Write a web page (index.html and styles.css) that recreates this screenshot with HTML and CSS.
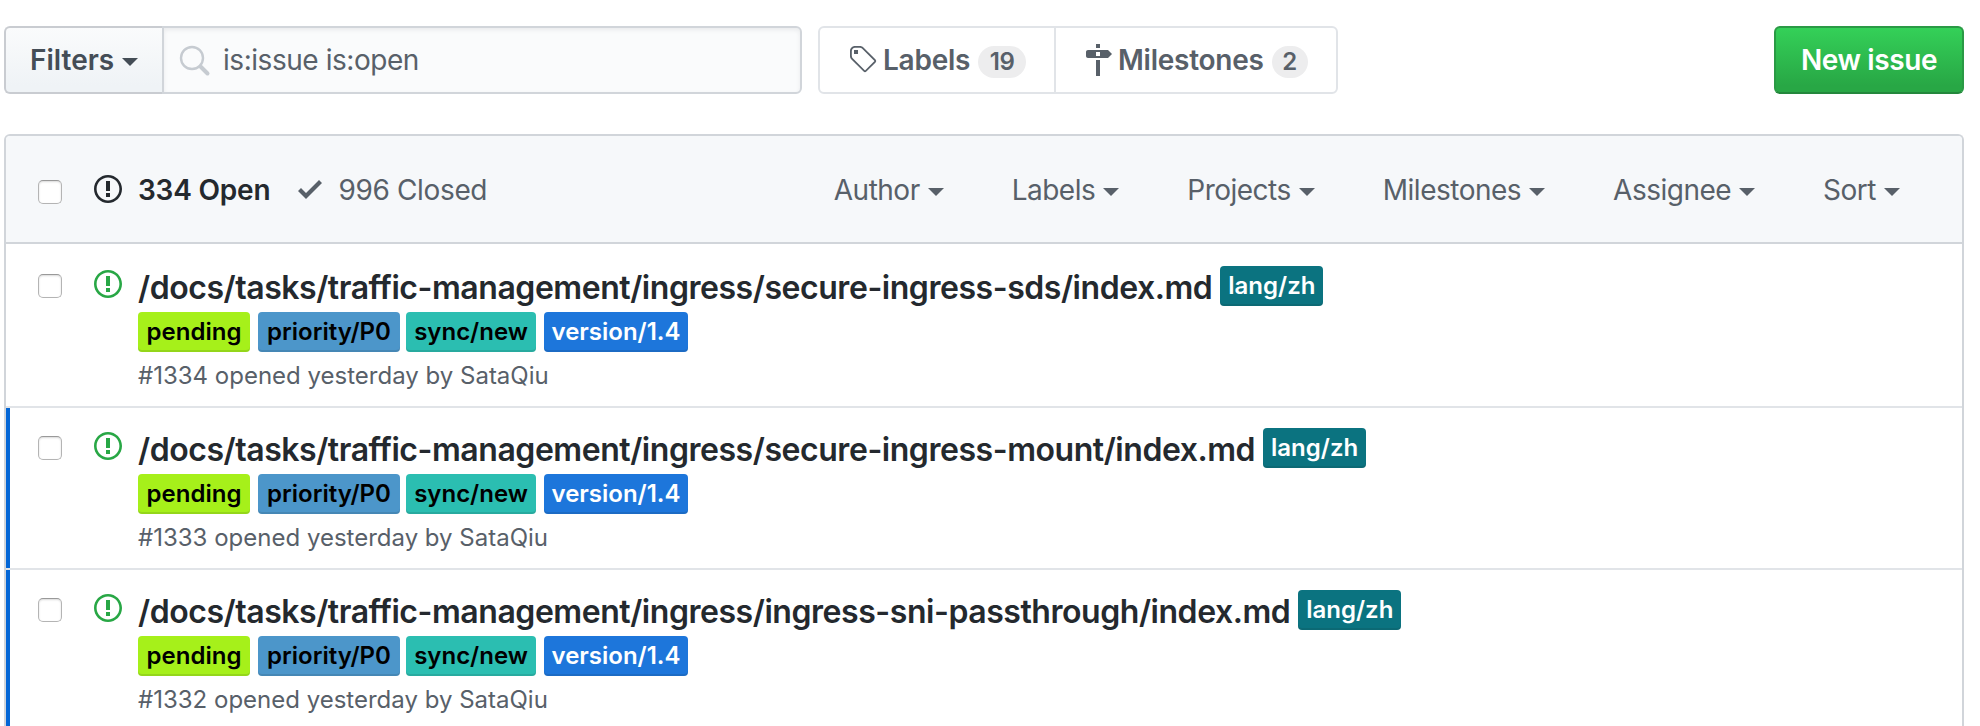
FILE: index.html
```
<!DOCTYPE html>
<html lang="en">
<head>
<meta charset="utf-8">
<title>Issues</title>
<link rel="stylesheet" href="styles.css">
</head>
<body>
<svg class="sprite" aria-hidden="true">
  <symbol id="issue" viewBox="0 0 14 16"><path d="M7 2.3c3.14 0 5.7 2.56 5.7 5.7s-2.56 5.7-5.7 5.7A5.71 5.71 0 0 1 1.3 8c0-3.14 2.56-5.7 5.7-5.7zM7 1C3.14 1 0 4.14 0 8s3.14 7 7 7 7-3.14 7-7-3.14-7-7-7zm1 3H6v5h2V4zm0 6H6v2h2v-2z"/></symbol>
  <symbol id="check" viewBox="0 0 12 16"><path d="M12 5l-8 8-4-4 1.5-1.5L4 10l6.5-6.5L12 5z"/></symbol>
  <symbol id="tag" viewBox="0 0 15 16"><path fill-rule="evenodd" d="M7.73 1.73C7.26 1.26 6.62 1 5.96 1H3.5C2.13 1 1 2.13 1 3.5v2.47c0 .66.27 1.3.73 1.77l6.06 6.06c.39.39 1.02.39 1.41 0l4.59-4.59a.996.996 0 0 0 0-1.41L7.73 1.73zM2.38 7.09c-.31-.3-.47-.7-.47-1.13V3.5c0-.88.72-1.59 1.59-1.59h2.47c.42 0 .83.16 1.13.47l6.14 6.13-4.73 4.73-6.13-6.15zM3.01 3h2v2H3V3h.01z"/></symbol>
  <symbol id="milestone" viewBox="0 0 14 16"><path fill-rule="evenodd" d="M8 2H6V0h2v2zm4 5H2c-.55 0-1-.45-1-1V4c0-.55.45-1 1-1h10l2 2-2 2zM8 4H6v2h2V4zM6 16h2V8H6v8z"/></symbol>
</svg>
<div class="toolbar">
  <button class="filters"><span>Filters</span><i class="caret"></i></button>
  <div class="search">
    <svg class="glass" viewBox="0 0 32 32"><circle cx="13" cy="13" r="11" fill="none" stroke="#c6cbd1" stroke-width="2.4"/><path d="M21.5 21.5L28.5 28.5" stroke="#c6cbd1" stroke-width="4" stroke-linecap="round"/></svg>
    <span>is:issue is:open</span>
  </div>
  <nav class="subnav">
    <a class="subnav-labels"><svg class="icon w30"><use href="#tag"/></svg><span>Labels</span><span class="counter c19">19</span></a>
    <a class="subnav-milestones"><svg class="icon w28"><use href="#milestone"/></svg><span>Milestones</span><span class="counter c2">2</span></a>
  </nav>
  <button class="new">New issue</button>
</div>
<main class="box">
  <header class="head">
    <i class="checkbox"></i>
    <svg class="icon w28 dark"><use href="#issue"/></svg>
    <span class="open">334 Open</span>
    <svg class="icon w24"><use href="#check"/></svg>
    <span class="closed">996 Closed</span>
    <div class="menus">
      <span class="menu"><span>Author</span><i class="caret"></i></span>
      <span class="menu"><span>Labels</span><i class="caret"></i></span>
      <span class="menu"><span>Projects</span><i class="caret"></i></span>
      <span class="menu"><span>Milestones</span><i class="caret"></i></span>
      <span class="menu"><span>Assignee</span><i class="caret"></i></span>
      <span class="menu"><span>Sort</span><i class="caret"></i></span>
    </div>
  </header>
  <section class="row">
    <i class="checkbox"></i>
    <svg class="icon w28 green"><use href="#issue"/></svg>
    <div class="body">
      <div class="line"><a class="title">/docs/tasks/traffic-management/ingress/secure-ingress-sds/index.md</a><span class="label lang">lang/zh</span></div>
      <div class="labels"><span class="label pending">pending</span><span class="label priority">priority/P0</span><span class="label sync">sync/new</span><span class="label version">version/1.4</span></div>
      <div class="meta">#1334 opened yesterday by SataQiu</div>
    </div>
  </section>
  <section class="row unread">
    <i class="checkbox"></i>
    <svg class="icon w28 green"><use href="#issue"/></svg>
    <div class="body">
      <div class="line"><a class="title">/docs/tasks/traffic-management/ingress/secure-ingress-mount/index.md</a><span class="label lang">lang/zh</span></div>
      <div class="labels"><span class="label pending">pending</span><span class="label priority">priority/P0</span><span class="label sync">sync/new</span><span class="label version">version/1.4</span></div>
      <div class="meta">#1333 opened yesterday by SataQiu</div>
    </div>
  </section>
  <section class="row unread">
    <i class="checkbox"></i>
    <svg class="icon w28 green"><use href="#issue"/></svg>
    <div class="body">
      <div class="line"><a class="title">/docs/tasks/traffic-management/ingress/ingress-sni-passthrough/index.md</a><span class="label lang">lang/zh</span></div>
      <div class="labels"><span class="label pending">pending</span><span class="label priority">priority/P0</span><span class="label sync">sync/new</span><span class="label version">version/1.4</span></div>
      <div class="meta">#1332 opened yesterday by SataQiu</div>
    </div>
  </section>
</main>
</body>
</html>
```
FILE: styles.css
```
* { box-sizing: border-box; }
body {
  margin: 0;
  width: 1980px;
  height: 726px;
  overflow: hidden;
  background: #fff;
  padding: 26px 16px 0 4px;
  font-family: Inter, "Liberation Sans", sans-serif;
  font-size: 28px;
  line-height: 40px;
  color: #586069;
  white-space: nowrap;
}
.sprite { display: none; }
button { font: inherit; margin: 0; padding: 0; }
.icon { height: 32px; fill: currentColor; flex: none; }
.w24 { width: 24px; }
.w28 { width: 28px; }
.w30 { width: 30px; }
.dark { color: #24292e; }
.green { color: #28a745; }
.caret {
  width: 0;
  height: 0;
  border: 8px solid transparent;
  border-top-color: currentColor;
  border-bottom: 0;
  flex: none;
}

.toolbar { display: flex; height: 68px; }
.filters {
  display: flex;
  align-items: center;
  width: 158px;
  padding-left: 24px;
  gap: 8px;
  font-weight: 600;
  color: #444d56;
  border: 2px solid #c9ccd1;
  border-right: 0;
  border-radius: 6px 0 0 6px;
  background: linear-gradient(#fafbfc, #eff3f6 90%);
}
.filters .caret { margin-top: 4px; }
.search {
  display: flex;
  align-items: center;
  width: 640px;
  border: 2px solid #d1d5da;
  border-radius: 0 6px 6px 0;
  background: #fafbfc;
  letter-spacing: -.45px;
  box-shadow: inset 0 2px 4px rgba(27, 31, 35, .075);
}
.glass { width: 32px; height: 32px; margin: 1px 12px 0 15px; }
.subnav {
  display: flex;
  width: 520px;
  margin-left: 16px;
  border: 2px solid #e1e4e8;
  border-radius: 6px;
  font-weight: 600;
  letter-spacing: -.25px;
}
.subnav a { display: flex; align-items: center; padding-left: 28px; }
.subnav-labels { width: 236px; border-right: 2px solid #e1e4e8; }
.subnav .icon { margin-right: 5px; }
.subnav-milestones .icon { margin-right: 6px; }
.counter {
  height: 32px;
  margin: 4px 0 0 8px;
  border-radius: 16px;
  background: rgba(27, 31, 35, .08);
  font-size: 24px;
  line-height: 32px;
  text-align: center;
}
.c19 { width: 48px; }
.c2 { width: 36px; }
.new {
  width: 190px;
  margin-left: auto;
  border: 2px solid #2a9a45;
  border-bottom-color: #24873c;
  border-radius: 6px;
  background: linear-gradient(#34d058, #28a745 90%);
  color: #fff;
  font-weight: 600;
  letter-spacing: -.4px;
}

.box {
  width: 1960px;
  height: 592px;
  margin-top: 40px;
  border: 2px solid #d1d5da;
  border-bottom: 0;
  border-radius: 6px 6px 0 0;
}
.head {
  display: flex;
  align-items: center;
  height: 108px;
  padding: 0 62px 0 32px;
  border-bottom: 2px solid #d1d5da;
  background: #f6f8fa;
  border-radius: 4px 4px 0 0;
}
.head span { padding-top: 1px; }
.checkbox {
  width: 24px;
  height: 24px;
  flex: none;
  border: 1px solid #b4b4b4;
  border-top-color: #999;
  border-radius: 5px;
  background: #fff;
  box-shadow: inset 0 1px 2px rgba(0, 0, 0, .15);
}
.head .checkbox { margin: 5px 32px 0 0; }
.open { margin: 0 28px 0 16px; font-weight: 600; letter-spacing: -.2px; color: #24292e; }
.closed { margin-left: 16px; letter-spacing: -.35px; }
.menus { display: flex; margin-left: auto; gap: 68px; letter-spacing: -.5px; }
.menu { display: flex; align-items: center; gap: 8px; }
.menu .caret { margin-top: 4px; }

.row {
  display: flex;
  align-items: flex-start;
  height: 162px;
  padding-left: 32px;
  border-top: 2px solid #e1e4e8;
}
.row:last-child { height: 158px; }
.head + .row { border-top-color: transparent; }
.unread { box-shadow: inset 4px 0 0 #0366d6; }
.row .checkbox { margin: 28px 32px 0 0; }
.row .icon { margin: 22px 16px 0 0; }
.body { padding-top: 20px; }
.line { display: flex; height: 46px; }
.title {
  padding-top: 2px;
  font-size: 32px;
  line-height: 40px;
  font-weight: 600;
  letter-spacing: -.45px;
  color: #24292e;
}
.label {
  display: block;
  height: 40px;
  border-radius: 4px;
  font-size: 24px;
  line-height: 40px;
  font-weight: 600;
  text-align: center;
  color: #000;
  box-shadow: inset 0 -2px 0 rgba(27, 31, 35, .12);
}
.lang { width: 103px; margin-left: 8px; background: #0b7380; color: #fff; }
.labels { display: flex; height: 40px; }
.pending { width: 112px; background: #a6f01a; margin-right: 8px; }
.priority { width: 142px; background: #4c96ca; margin-right: 6px; }
.sync { width: 130px; background: #2bbeb1; margin-right: 8px; }
.version { width: 144px; background: #1d76db; color: #fff; }
.meta { margin-top: 8px; font-size: 24px; line-height: 32px; }
```
